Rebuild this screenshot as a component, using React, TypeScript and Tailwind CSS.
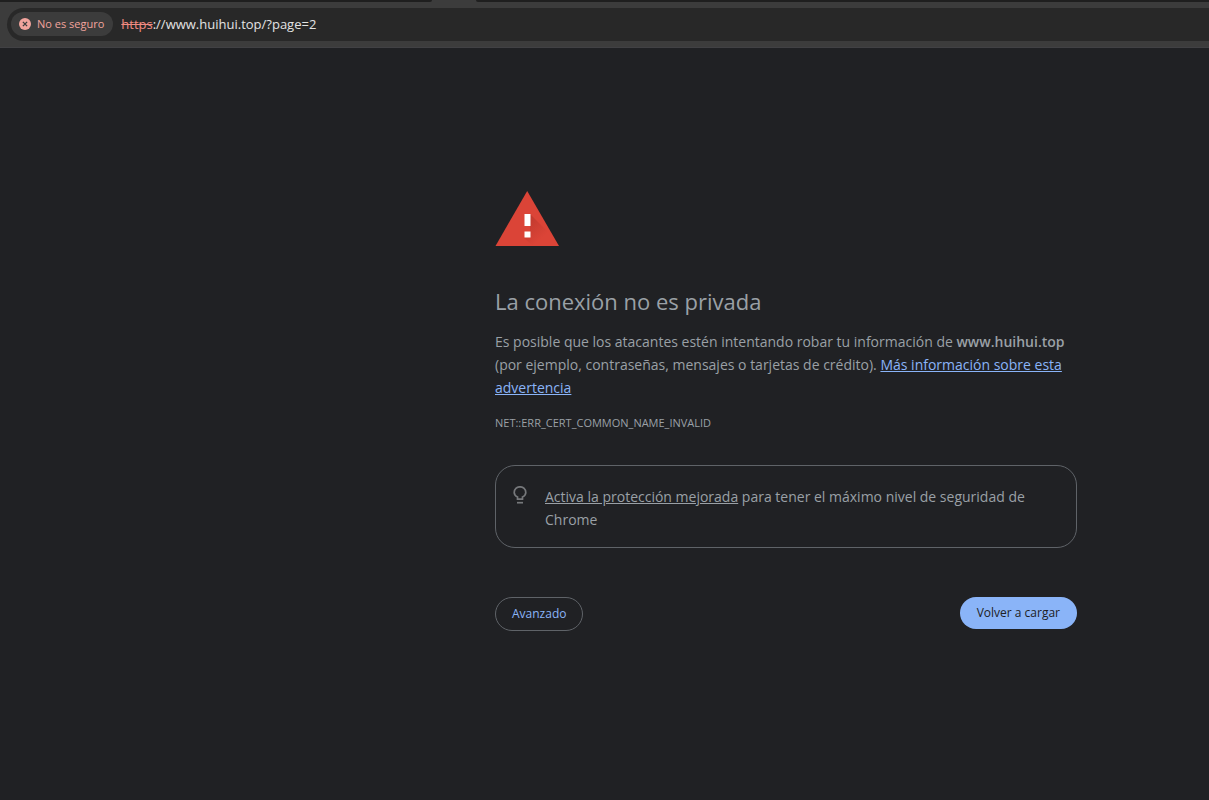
function AddressBar() {
  return (
    <header className="border-b border-[#414144] bg-[#3c3c3c]">
      <div className="flex h-0.5 justify-start">
        <div className="w-[432px] rounded-br-sm bg-[#1f1f1f]" />
        <div className="w-11" />
        <div className="grow rounded-bl-sm bg-[#1f1f1f]" />
      </div>
      <div className="pt-1.5 pb-1.5 pl-[7px]">
        <div className="flex h-[33px] items-center gap-2 rounded-l-full bg-[#282828] pb-px pl-1">
          <button
            type="button"
            className="flex h-6 items-center gap-1.5 rounded-full bg-[#3c3c3c] pr-[9px] pl-2 text-[11px] leading-4 text-[#f2a49d]"
          >
            <svg viewBox="0 0 12 12" className="size-3" aria-hidden="true">
              <circle cx="6" cy="6" r="6" fill="#f2a49d" />
              <path d="M3.9 3.9l4.2 4.2M8.1 3.9L3.9 8.1" stroke="#3c3c3c" strokeWidth="1.3" />
            </svg>
            No es seguro
          </button>
          <div className="flex grow items-center text-[13px] leading-5">
            <label htmlFor="address" className="text-[#f28b82] line-through">
              https
            </label>
            <input
              id="address"
              type="text"
              defaultValue="://www.huihui.top/?page=2"
              className="min-w-0 grow bg-transparent text-[#e3e3e3] outline-none"
            />
          </div>
        </div>
      </div>
    </header>
  );
}

function WarningIcon() {
  return (
    <svg viewBox="0 0 64 56" className="h-14 w-16" aria-hidden="true">
      <defs>
        <linearGradient id="shade" x1="32" y1="28" x2="48" y2="46" gradientUnits="userSpaceOnUse">
          <stop offset="0" stopColor="#b5352a" stopOpacity=".7" />
          <stop offset="1" stopColor="#b5352a" stopOpacity="0" />
        </linearGradient>
      </defs>
      <path d="M32.200 0L64 55H.500z" fill="#db4437" />
      <path d="M35 23l18 18 9 14H38l-9-8 6-7z" fill="url(#shade)" />
      <path d="M29.500 23h6v12h-6zM29.500 40.500h6v6h-6z" fill="#fff" />
    </svg>
  );
}

function BulbIcon() {
  return (
    <svg viewBox="0 0 14 18" className="h-[18px] w-3.5 shrink-0" fill="none" stroke="#76787b" strokeWidth="1.7" aria-hidden="true">
      <path d="M4.500 13.200v-2.300C2.400 9.900 1.200 8.400 1.200 6.500a5.800 5.700 0 0 1 11.600 0c0 1.900-1.200 3.400-3.300 4.400v2.300z" />
      <path d="M4 16.700h6" />
    </svg>
  );
}

export default function App() {
  return (
    <div className="min-h-screen bg-[#202124] font-['Open_Sans','Noto_Sans',sans-serif] text-[#9aa0a6]">
      <AddressBar />
      <main className="pt-[143px] pr-4 pl-[495px]">
        <div className="max-w-[582px]">
          <WarningIcon />
          <h1 className="mt-10 text-[22px] leading-7">La conexión no es privada</h1>
          <p className="mt-[15px] text-[14px] leading-[23px]">
            Es posible que los atacantes estén intentando robar tu información de{" "}
            <strong className="font-semibold">www.huihui.top</strong> (por ejemplo, contraseñas, mensajes o tarjetas de
            crédito).{" "}
            <a href="#info" className="text-[#8ab4f8] underline">
              Más información sobre esta advertencia
            </a>
          </p>
          <p className="mt-3 text-[11px] leading-6">NET::ERR_CERT_COMMON_NAME_INVALID</p>
          <div className="mt-[30px] flex gap-[18px] rounded-[20px] border border-[#5f6368] px-[17px] pt-5 pb-4">
            <BulbIcon />
            <p className="-mt-px text-[14px] leading-[23px]">
              <a href="#proteccion" className="underline">
                Activa la protección mejorada
              </a>{" "}
              para tener el máximo nivel de seguridad de Chrome
            </p>
          </div>
          <div className="mt-[49px] flex items-start justify-between text-[12px] leading-5">
            <button type="button" className="h-[34px] rounded-full border border-[#5f6368] px-4 text-[#8ab4f8]">
              Avanzado
            </button>
            <button type="button" className="h-8 rounded-full bg-[#8ab4f8] px-[17px] text-[#202124]">
              Volver a cargar
            </button>
          </div>
        </div>
      </main>
    </div>
  );
}
